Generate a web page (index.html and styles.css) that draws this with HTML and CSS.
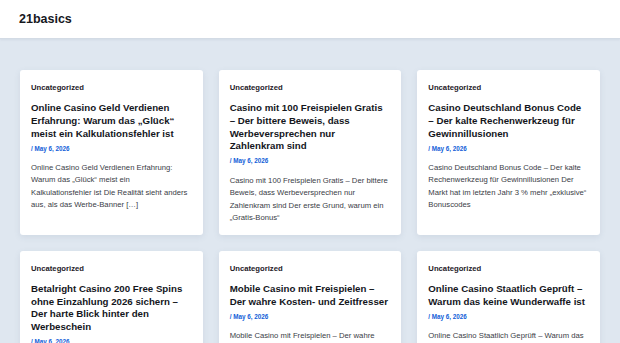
FILE: index.html
```html
<!DOCTYPE html>
<html lang="de">
<head>
<meta charset="utf-8">
<title>21basics</title>
<link rel="stylesheet" href="styles.css">
</head>
<body>
<header class="site-header">
  <div class="brand">21basics</div>
</header>
<main class="posts">
  <article class="card">
    <div class="cat">Uncategorized</div>
    <h2 class="title">Online Casino Geld Verdienen Erfahrung: Warum das „Glück“ meist ein Kalkulationsfehler ist</h2>
    <div class="date">/ May 6, 2026</div>
    <p class="excerpt">Online Casino Geld Verdienen Erfahrung: Warum das „Glück“ meist ein Kalkulationsfehler ist Die Realität sieht anders aus, als das Werbe-Banner […]</p>
  </article>
  <article class="card">
    <div class="cat">Uncategorized</div>
    <h2 class="title">Casino mit 100 Freispielen Gratis – Der bittere Beweis, dass Werbeversprechen nur Zahlenkram sind</h2>
    <div class="date">/ May 6, 2026</div>
    <p class="excerpt">Casino mit 100 Freispielen Gratis – Der bittere Beweis, dass Werbeversprechen nur Zahlenkram sind Der erste Grund, warum ein „Gratis-Bonus“</p>
  </article>
  <article class="card">
    <div class="cat">Uncategorized</div>
    <h2 class="title">Casino Deutschland Bonus Code – Der kalte Rechenwerkzeug für Gewinnillusionen</h2>
    <div class="date">/ May 6, 2026</div>
    <p class="excerpt">Casino Deutschland Bonus Code – Der kalte Rechenwerkzeug für Gewinnillusionen Der Markt hat im letzten Jahr 3 % mehr „exklusive“ Bonuscodes</p>
  </article>
  <article class="card">
    <div class="cat">Uncategorized</div>
    <h2 class="title">Betalright Casino 200 Free Spins ohne Einzahlung 2026 sichern – Der harte Blick hinter den Werbeschein</h2>
    <div class="date">/ May 6, 2026</div>
    <p class="excerpt">Betalright Casino 200 Free Spins ohne Einzahlung 2026 sichern – Der harte Blick hinter den Werbeschein Wer glaubt, dass</p>
  </article>
  <article class="card">
    <div class="cat">Uncategorized</div>
    <h2 class="title">Mobile Casino mit Freispielen – Der wahre Kosten- und Zeitfresser</h2>
    <div class="date">/ May 6, 2026</div>
    <p class="excerpt">Mobile Casino mit Freispielen – Der wahre Kosten- und Zeitfresser Wer glaubt, dass ein Bonus</p>
  </article>
  <article class="card">
    <div class="cat">Uncategorized</div>
    <h2 class="title">Online Casino Staatlich Geprüft – Warum das keine Wunderwaffe ist</h2>
    <div class="date">/ May 6, 2026</div>
    <p class="excerpt">Online Casino Staatlich Geprüft – Warum das keine Wunderwaffe ist Die Realität</p>
  </article>
</main>
</body>
</html>
```
FILE: styles.css
```css
html, body {
  margin: 0;
  padding: 0;
}
body {
  background: #dfe7f0;
  font-family: "Liberation Sans", Arial, sans-serif;
  color: #1b1d24;
}
.site-header {
  height: 38px;
  background: #ffffff;
  border-bottom: 1px solid #d3dbe5;
  box-shadow: 0 1px 2px rgba(60, 80, 110, 0.08);
  display: flex;
  align-items: center;
  padding: 0 19px;
}
.brand {
  font-size: 12.5px;
  font-weight: 700;
  color: #16181d;
}
.posts {
  display: grid;
  grid-template-columns: repeat(3, 1fr);
  gap: 16px;
  padding: 31px 20px 20px;
}
.card {
  background: #ffffff;
  border-radius: 3px;
  padding: 12px 11px 10px;
  box-shadow: 0 2px 6px rgba(70, 90, 120, 0.10);
}
.cat {
  font-size: 7.7px;
  font-weight: 700;
  line-height: 12.4px;
  color: #1e2028;
  margin-bottom: 8px;
}
.title {
  font-size: 9.7px;
  font-weight: 700;
  line-height: 12.6px;
  margin: 0 0 3.4px;
  color: #14161c;
}
.date {
  font-size: 6.3px;
  font-weight: 700;
  line-height: 10px;
  color: #1160d8;
  margin-bottom: 8.4px;
}
.excerpt {
  font-size: 7.7px;
  line-height: 12.5px;
  margin: 0;
  color: #3a3d46;
}
```
